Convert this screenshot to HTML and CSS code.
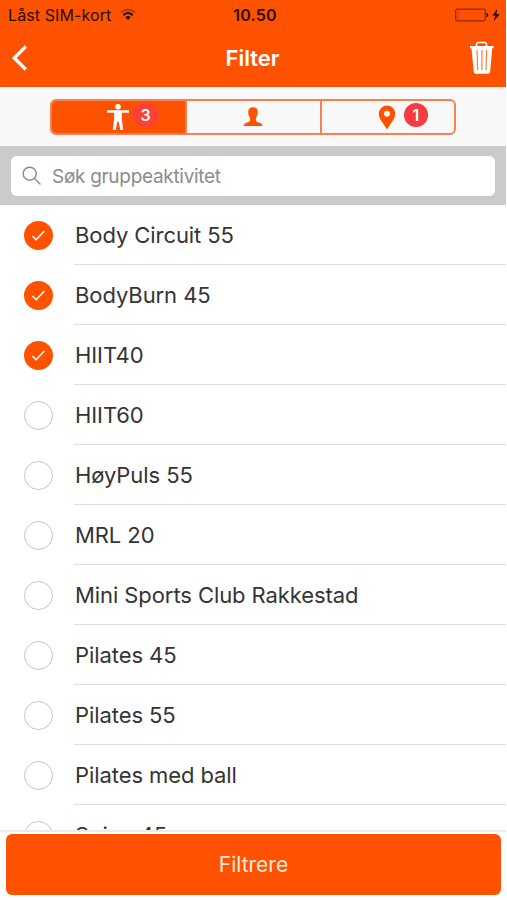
FILE: index.html
```html
<!DOCTYPE html>
<html lang="no">
<head>
<meta charset="utf-8">
<title>Filter</title>
<link rel="stylesheet" href="styles.css">
</head>
<body>
<div class="app">
  <header class="top">
    <div class="status">
      <div class="carrier"><span>Låst SIM-kort</span>
        <svg class="wifi" width="16" height="13" viewBox="0 0 16 13" fill="none"><path d="M1 4.600Q8-1.200 15 4.600" stroke="#a83200" stroke-width="1.700"/><path d="M3.300 7.200Q8 3 12.700 7.200" stroke="#2b0d00" stroke-width="1.900"/><path d="M5.300 9.200Q8 7 10.700 9.200L8 12Z" fill="#1c0800"/></svg>
      </div>
      <span class="time">10.50</span>
      <svg class="battery" width="46" height="16" viewBox="0 0 46 16"><rect x="1.700" y="2.200" width="29.600" height="11.600" rx="1.600" fill="none" stroke="#8e2b00" stroke-width="1.200"/><rect x="3.200" y="3.700" width="2.600" height="8.600" fill="#ff3b30"/><path d="M32.400 5.700q2 .4 2 2.300t-2 2.300z" fill="#3a1200"/><path d="M43.300 2 38.300 8.600h3.100l-1.700 5.600L45.700 7.200h-3.300z" fill="#1c0800"/></svg>
    </div>
    <nav class="bar">
      <svg class="back" width="20" height="30" viewBox="0 0 20 30"><path d="M15.800 3.500 4.300 15l11.500 11.500" fill="none" stroke="#fff" stroke-width="3.300"/></svg>
      <h1>Filter</h1>
      <svg class="trash" width="26" height="34" viewBox="0 0 26 34"><path d="M7.500 5V3.500q0-2 2-2h6q2 0 2 2V5" fill="none" stroke="#fff" stroke-width="1.500"/><path d="M1 5h23.500v2.300h-1.300L21.200 30.500q-.2 2.300-2.300 2.300H7q-2.100 0-2.300-2.300L2.500 7.300H1z" fill="#fff"/><path d="m8 9 .7 20M12.900 9v20M17.700 9l-.7 20" stroke="#ff7b3d" stroke-width="1.200"/></svg>
    </nav>
  </header>
  <div class="tabs">
    <div class="segments">
      <div class="segment active">
        <svg width="24" height="28" viewBox="0 0 24 28" fill="#fff"><circle cx="12" cy="3.800" r="2.800"/><path d="M1 7.200h22v2.600h-7.200v6l1.400 11.200h-2.900l-1.700-8.500h-1.200L9.700 27H6.800l1.400-11.200v-6H1z"/></svg>
        <span class="badge soft">3</span>
      </div>
      <div class="segment">
        <svg width="20" height="20" viewBox="0 0 20 20" fill="#ff5200"><path d="M10 .3c3.300 0 4.900 2 4.800 4.900-.1 2-.7 4.200-1.900 5.800v2.700c.2.900 1.200 1.300 2.800 1.800 2.500.8 3.500 1.500 3.800 3.500h-19c.3-2 1.300-2.700 3.800-3.500 1.600-.5 2.600-.9 2.800-1.800V11C5.900 9.400 5.300 7.200 5.200 5.200 5.100 2.300 6.700.3 10 .3z"/></svg>
      </div>
      <div class="segment place">
        <svg width="18" height="25" viewBox="0 0 18 25"><path fill="#ff5200" fill-rule="evenodd" d="M9 .5a8.200 8.200 0 0 1 8.200 8.200C17.200 14 12 19 9 24.500 6 19 .8 14 .8 8.700A8.200 8.200 0 0 1 9 .5zm0 5.200a3 3 0 1 0 0 6 3 3 0 0 0 0-6z"/></svg>
        <span class="badge">1</span>
      </div>
    </div>
  </div>
  <div class="search">
    <label class="field">
      <svg width="20" height="20" viewBox="0 0 20 20" fill="none" stroke="#8c8c8c" stroke-width="1.400"><circle cx="7.700" cy="7.700" r="6.500"/><path d="m12.500 12.500 6 6"/></svg>
      <span>Søk gruppeaktivitet</span>
    </label>
  </div>
  <ul class="list">
    <li><i class="check on"><svg viewBox="0 0 28 28"><path d="m8.200 14.500 3.500 3.600 8-8.400"/></svg></i><span>Body Circuit 55</span></li>
    <li><i class="check on"><svg viewBox="0 0 28 28"><path d="m8.200 14.500 3.500 3.600 8-8.400"/></svg></i><span>BodyBurn 45</span></li>
    <li><i class="check on"><svg viewBox="0 0 28 28"><path d="m8.200 14.500 3.500 3.600 8-8.400"/></svg></i><span>HIIT40</span></li>
    <li><i class="check"></i><span>HIIT60</span></li>
    <li><i class="check"></i><span>HøyPuls 55</span></li>
    <li><i class="check"></i><span>MRL 20</span></li>
    <li><i class="check"></i><span>Mini Sports Club Rakkestad</span></li>
    <li><i class="check"></i><span>Pilates 45</span></li>
    <li><i class="check"></i><span>Pilates 55</span></li>
    <li><i class="check"></i><span>Pilates med ball</span></li>
    <li><i class="check"></i><span>Spinn 45</span></li>
  </ul>
  <footer class="footer"><button type="button">Filtrere</button></footer>
</div>
</body>
</html>
```
FILE: styles.css
```css
* { box-sizing: border-box; }
body { margin: 0; background: #fff; font-family: Inter, "Liberation Sans", sans-serif; }
.app { width: 506px; height: 900px; display: flex; flex-direction: column; overflow: hidden; }
svg { display: block; flex: none; }
.top { height: 87px; flex: none; background: #ff5200; }
.status { height: 29px; padding: 0 6px 0 8px; display: grid; grid-template-columns: 1fr auto 1fr; align-items: center; color: #2b0d00; font-size: 16px; }
.carrier { display: flex; align-items: center; gap: 9px; letter-spacing: 0.1px; }
.time { padding-left: 2px; font-weight: 600; letter-spacing: 0.2px; }
.battery { justify-self: end; }
.bar { height: 58px; padding: 0 11px 0 10px; display: grid; grid-template-columns: 1fr auto 1fr; align-items: center; }
.bar h1 { margin: 0; color: #fff; font-size: 22px; font-weight: 600; line-height: 56px; }
.trash { justify-self: end; }
.tabs { height: 59px; flex: none; padding: 12px 50px 0; background: #f8f8f8; }
.segments { height: 36px; display: grid; grid-template-columns: 133px 135px 134px; border: 2px solid #f58250; border-radius: 6px; overflow: hidden; }
.segment { display: flex; align-items: center; justify-content: center; border-left: 2px solid #f58250; }
.segment:nth-child(2) { padding-right: 2px; }
.segment.active { background: #ff5200; border-left: 0; gap: 2px; padding-left: 28px; }
.segment.place { gap: 8px; padding-left: 30px; }
.badge { width: 24px; height: 24px; border-radius: 50%; background: #f63b42; color: #fff; font-size: 16px; font-weight: 600; line-height: 24px; text-align: center; }
.badge.soft { width: 27px; background: #fa4236; margin-top: -4px; }
.place .badge { margin-top: -4px; }
.search { height: 59px; flex: none; padding: 10px 11px; background: #cbcbcb; }
.field { height: 40px; padding-left: 11px; display: flex; align-items: center; gap: 10px; background: #fff; border-radius: 6px; color: #8c8c8c; font-size: 19px; letter-spacing: -0.3px; }
.list { flex: none; height: 625px; margin: 0; padding: 0; overflow: hidden; list-style: none; }
.list li { height: 60px; padding-left: 24px; display: flex; align-items: center; color: #343434; font-size: 22px; letter-spacing: -0.08px; }
.list span { height: 60px; flex: 1; margin-left: 21px; padding-left: 1px; line-height: 61px; border-bottom: 1px solid #dfdfdf; white-space: nowrap; }
.check { width: 29px; height: 29px; flex: none; border: 1.500px solid #c4c4c4; border-radius: 50%; }
.check.on { border: 0; background: #ff5200; }
.check path { fill: none; stroke: #fff; stroke-width: 1.500; }
.footer { height: 70px; flex: none; padding: 2px 5px 0 6px; border-top: 2px solid #ebebeb; background: #fff; }
.footer button { display: block; width: 495px; height: 61px; padding: 0; border: 0; border-radius: 6px; background: #ff5200; color: #ffe9de; font: 21px Inter, sans-serif; }
```
